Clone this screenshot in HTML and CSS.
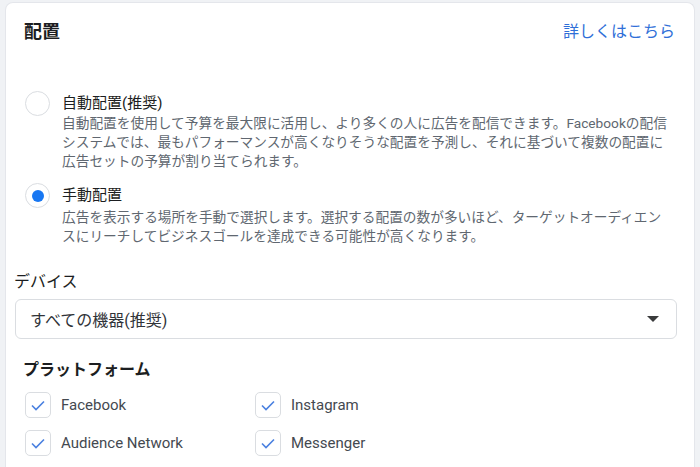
FILE: index.html
```html
<!DOCTYPE html>
<html lang="ja">
<head>
    <meta charset="UTF-8">
    <meta name="viewport" content="width=device-width, initial-scale=1.0">
    <title>配置</title>
    <link rel="stylesheet" href="styles.css">
</head>
<body>
    <div class="card">
        <div class="card-header">
            <h1>配置</h1>
            <a href="#" class="more-link">詳しくはこちら</a>
        </div>

        <div class="options">
            <div class="option">
                <span class="radio"></span>
                <div class="option-text">
                    <div class="option-label">自動配置(推奨)</div>
                    <div class="option-desc">自動配置を使用して予算を最大限に活用し、より多くの人に広告を配信できます。Facebookの配信<br>システムでは、最もパフォーマンスが高くなりそうな配置を予測し、それに基づいて複数の配置に<br>広告セットの予算が割り当てられます。</div>
                </div>
            </div>
            <div class="option">
                <span class="radio checked"></span>
                <div class="option-text">
                    <div class="option-label">手動配置</div>
                    <div class="option-desc manual">広告を表示する場所を手動で選択します。選択する配置の数が多いほど、ターゲットオーディエン<br>スにリーチしてビジネスゴールを達成できる可能性が高くなります。</div>
                </div>
            </div>
        </div>

        <h2 class="device-title">デバイス</h2>
        <div class="select">
            <span>すべての機器(推奨)</span>
            <span class="caret"></span>
        </div>

        <h2 class="platform-title">プラットフォーム</h2>
        <div class="platforms">
            <label class="check-item">
                <span class="checkbox"><svg viewBox="0 0 24 24"><path d="M6 12.5l4 4 8-8"/></svg></span>
                Facebook
            </label>
            <label class="check-item">
                <span class="checkbox"><svg viewBox="0 0 24 24"><path d="M6 12.5l4 4 8-8"/></svg></span>
                Instagram
            </label>
            <label class="check-item">
                <span class="checkbox"><svg viewBox="0 0 24 24"><path d="M6 12.5l4 4 8-8"/></svg></span>
                Audience Network
            </label>
            <label class="check-item">
                <span class="checkbox"><svg viewBox="0 0 24 24"><path d="M6 12.5l4 4 8-8"/></svg></span>
                Messenger
            </label>
        </div>
    </div>
</body>
</html>
```

FILE: styles.css
```css
body {
    margin: 0;
    padding: 0;
    background-color: #f0f2f5;
    color: #1c1e21;
    font-family: Roboto, "Noto Sans CJK JP", sans-serif;
    overflow: hidden;
}

.card {
    box-sizing: border-box;
    min-height: calc(100vh - 2px);
    margin: 2px 5px 0 5px;
    background-color: #fff;
    border: 1px solid #e4e6eb;
    border-bottom: none;
    border-radius: 8px 8px 0 0;
}

.card-header {
    display: flex;
    justify-content: space-between;
    align-items: center;
    padding: 17px 19px 0 18px;
    height: 24px;
}

.card-header h1 {
    margin: 0;
    font-size: 18px;
    font-weight: bold;
    line-height: 24px;
}

.more-link {
    color: #2f6fd8;
    font-size: 16px;
    text-decoration: none;
    line-height: 24px;
}

.options {
    margin-top: 48px;
    padding-left: 19px;
}

.option {
    display: flex;
    gap: 12px;
    margin-bottom: 13px;
}

.radio {
    width: 23px;
    height: 23px;
    border: 1px solid #dadde1;
    border-radius: 50%;
    flex-shrink: 0;
    margin-top: -1px;
    display: flex;
    align-items: center;
    justify-content: center;
}

.radio.checked::after {
    content: "";
    width: 12px;
    height: 12px;
    border-radius: 50%;
    background-color: #1877f2;
}

.option-label {
    font-size: 15px;
    line-height: 22px;
}

.option-desc {
    font-size: 13.7px;
    line-height: 19px;
    color: #606770;
    white-space: nowrap;
}

.option-desc.manual {
    margin-top: 2px;
}

.device-title {
    margin: 25px 0 0 8px;
    font-size: 16px;
    font-weight: normal;
    line-height: 22px;
}

.select {
    display: flex;
    justify-content: space-between;
    align-items: center;
    margin: 6px 17px 0 9px;
    height: 38px;
    padding: 0 17px 0 14px;
    border: 1px solid #dadde1;
    border-radius: 6px;
    font-size: 16px;
    color: #303338;
}

.caret {
    width: 0;
    height: 0;
    border-left: 6px solid transparent;
    border-right: 6px solid transparent;
    border-top: 6px solid #3a3b3c;
}

.platform-title {
    margin: 20px 0 0 17px;
    font-size: 16px;
    font-weight: bold;
    line-height: 22px;
}

.platforms {
    display: grid;
    grid-template-columns: 230px 230px;
    row-gap: 12px;
    margin-top: 11px;
    padding-left: 19px;
}

.check-item {
    display: flex;
    align-items: center;
    gap: 10px;
    font-size: 15px;
    color: #444950;
    height: 26px;
}

.checkbox {
    width: 24px;
    height: 24px;
    border: 1px solid #dadde1;
    border-radius: 5px;
    flex-shrink: 0;
}

.checkbox svg {
    width: 24px;
    height: 24px;
    display: block;
}

.checkbox path {
    fill: none;
    stroke: #4a80e0;
    stroke-width: 1.6;
}
```
